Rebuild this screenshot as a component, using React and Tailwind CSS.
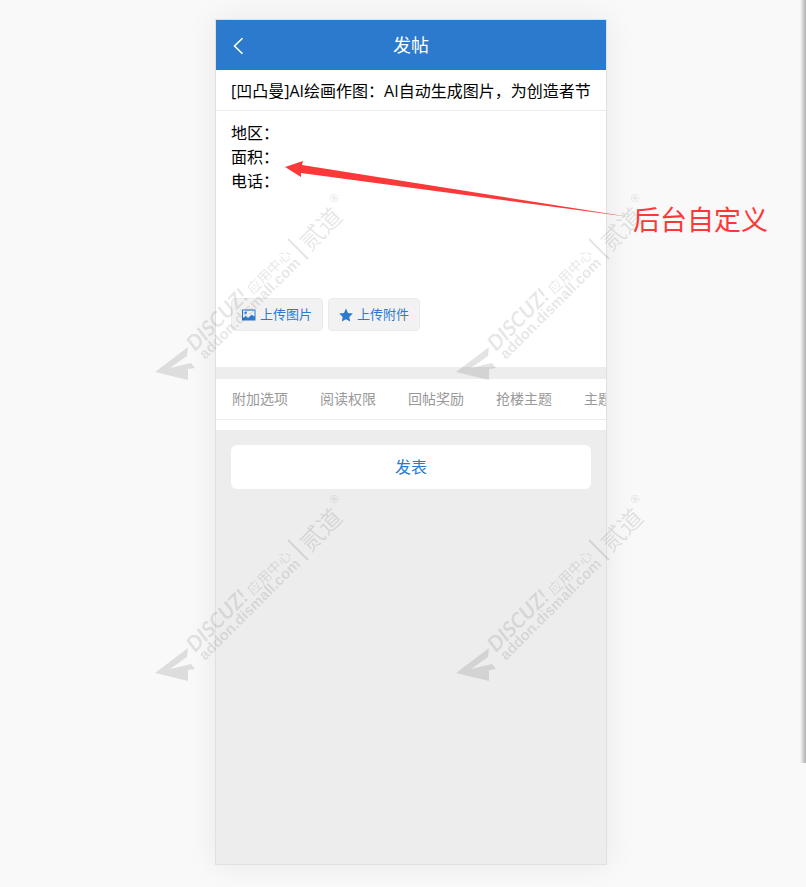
import React, { useState } from "react";

const tabs = ["附加选项", "阅读权限", "回帖奖励", "抢楼主题", "主题标签"];

function PictureIcon() {
    return (
        <svg viewBox="0 0 14 12" className="w-[14px] h-3 shrink-0" fill="currentColor" aria-hidden="true">
            <path fillRule="evenodd" d="M0 .5h13.5v11H0zM1 1.500v7.500l2.500-2 2.500 2 3.500-3.200 3 1.700V1.500z" />
            <circle cx="3.700" cy="3.800" r="1.200" />
        </svg>
    );
}

function StarIcon() {
    return (
        <svg viewBox="0 0 14 14" className="w-[14px] h-[14px] shrink-0" fill="currentColor" aria-hidden="true">
            <path d="M7 .5l2 4.400 4.800.6-3.500 3.400.9 4.700L7 11.300l-4.200 2.300.9-4.700L.2 5.500 5 4.900z" />
        </svg>
    );
}

function UploadButton({ icon, children }) {
    return (
        <button
            type="button"
            className="flex items-center gap-1 h-[33px] px-[10px] rounded-sm border border-[#ebebeb] bg-[#f2f2f2] text-[13px] text-[#2b7acd]"
        >
            {icon}
            {children}
        </button>
    );
}

function Watermark() {
    return (
        <svg viewBox="0 0 301 301" className="w-[301px] h-[301px]" fill="#000" fillOpacity="0.11" aria-hidden="true">
            <path d="M38 157L5 182L38 190V179L45 178L41 173L20 178L37 166Z" />
            <g transform="translate(45 162) rotate(-45)">
                <text fontFamily="Lato" fontSize="21" fontWeight="700" fontStyle="italic">DISCUZ!</text>
            </g>
            <g transform="translate(103 105) rotate(-45)">
                <text fontFamily="Noto Sans CJK SC" fontSize="14">应用中心</text>
            </g>
            <g transform="translate(55 170) rotate(-45)">
                <text fontFamily="Liberation Sans" fontSize="15" fontWeight="700">addon.dismall.com</text>
            </g>
            <path d="M138 49L158 69" stroke="#000" strokeOpacity="0.11" strokeWidth="2" />
            <g transform="translate(160 62) rotate(-45)">
                <text fontFamily="Noto Sans CJK SC" fontSize="24">贰道</text>
            </g>
            <g transform="translate(184 14) rotate(-45)">
                <text fontFamily="Liberation Sans" fontSize="12" fontWeight="700">®</text>
            </g>
        </svg>
    );
}

function App() {
    const [title, setTitle] = useState("[凹凸曼]AI绘画作图：AI自动生成图片，为创造者节省时间");
    const [message, setMessage] = useState("地区：\n面积：\n电话：");

    return (
        <div
            lang="zh-CN"
            className="relative flex justify-center min-h-screen pt-[19px] pb-[22px] pl-4 overflow-hidden bg-[#f9f9f9] font-['Open_Sans','Noto_Sans_CJK_SC',sans-serif]"
        >
            <main className="relative w-full max-w-[392px] border border-[#dfe1e1] bg-[#ededed] shadow-[0_0_30px_rgba(0,20,15,0.07)]">
                <header className="relative flex items-center justify-center h-[50px] bg-[#2b7acd] text-white">
                    <button type="button" aria-label="返回" className="absolute left-4 top-[17px]">
                        <svg viewBox="0 0 12 18" className="w-3 h-[18px]" fill="none" stroke="currentColor" strokeWidth="1.600">
                            <path d="M10.500 1.200L2.500 9l8 7.800" />
                        </svg>
                    </button>
                    <h1 className="text-lg">发帖</h1>
                </header>

                <form onSubmit={(e) => e.preventDefault()}>
                    <div className="h-[41px] px-[15px] border-b border-[#ededed] bg-white">
                        <input
                            aria-label="标题"
                            value={title}
                            onChange={(e) => setTitle(e.target.value)}
                            className="w-full h-10 text-base text-black outline-none"
                        />
                    </div>

                    <div className="px-[15px] pt-[10px] pb-9 bg-white">
                        <textarea
                            aria-label="内容"
                            value={message}
                            onChange={(e) => setMessage(e.target.value)}
                            className="block w-full h-[177px] text-base leading-6 text-black resize-none outline-none"
                        />
                        <div className="flex gap-[5px]">
                            <UploadButton icon={<PictureIcon />}>上传图片</UploadButton>
                            <UploadButton icon={<StarIcon />}>上传附件</UploadButton>
                        </div>
                    </div>

                    <div className="mt-3 pb-[10px] bg-white">
                        <nav className="flex h-[41px] overflow-x-auto overflow-y-hidden [scrollbar-width:none] border-b border-[#ededed]">
                            {tabs.map((tab) => (
                                <button key={tab} type="button" className="px-4 shrink-0 text-sm text-[#999]">
                                    {tab}
                                </button>
                            ))}
                        </nav>
                    </div>

                    <div className="p-[15px]">
                        <button type="submit" className="w-full h-11 rounded-md bg-white text-base text-[#2b7acd]">
                            发表
                        </button>
                    </div>
                </form>

                <div className="absolute -left-[66px] top-[170px] grid grid-cols-[301px_301px] pointer-events-none">
                    <Watermark />
                    <Watermark />
                    <Watermark />
                    <Watermark />
                </div>

                {/* callout pointing at the default fields */}
                <div className="absolute left-[69px] top-[140px] flex pointer-events-none">
                    <svg viewBox="0 0 348 60" className="w-[348px] h-[60px] shrink-0" fill="#fd3838" aria-hidden="true">
                        <path d="M0 7L18 1L17 5L345 57L16 13V17Z" />
                    </svg>
                    <p className="mt-10 text-[27px] leading-10 whitespace-nowrap text-[#fd3838]">后台自定义</p>
                </div>
            </main>

            <div className="absolute right-0 top-0 w-[6px] h-[763px] bg-linear-to-r from-transparent to-black/30" />
        </div>
    );
}

export default App;
